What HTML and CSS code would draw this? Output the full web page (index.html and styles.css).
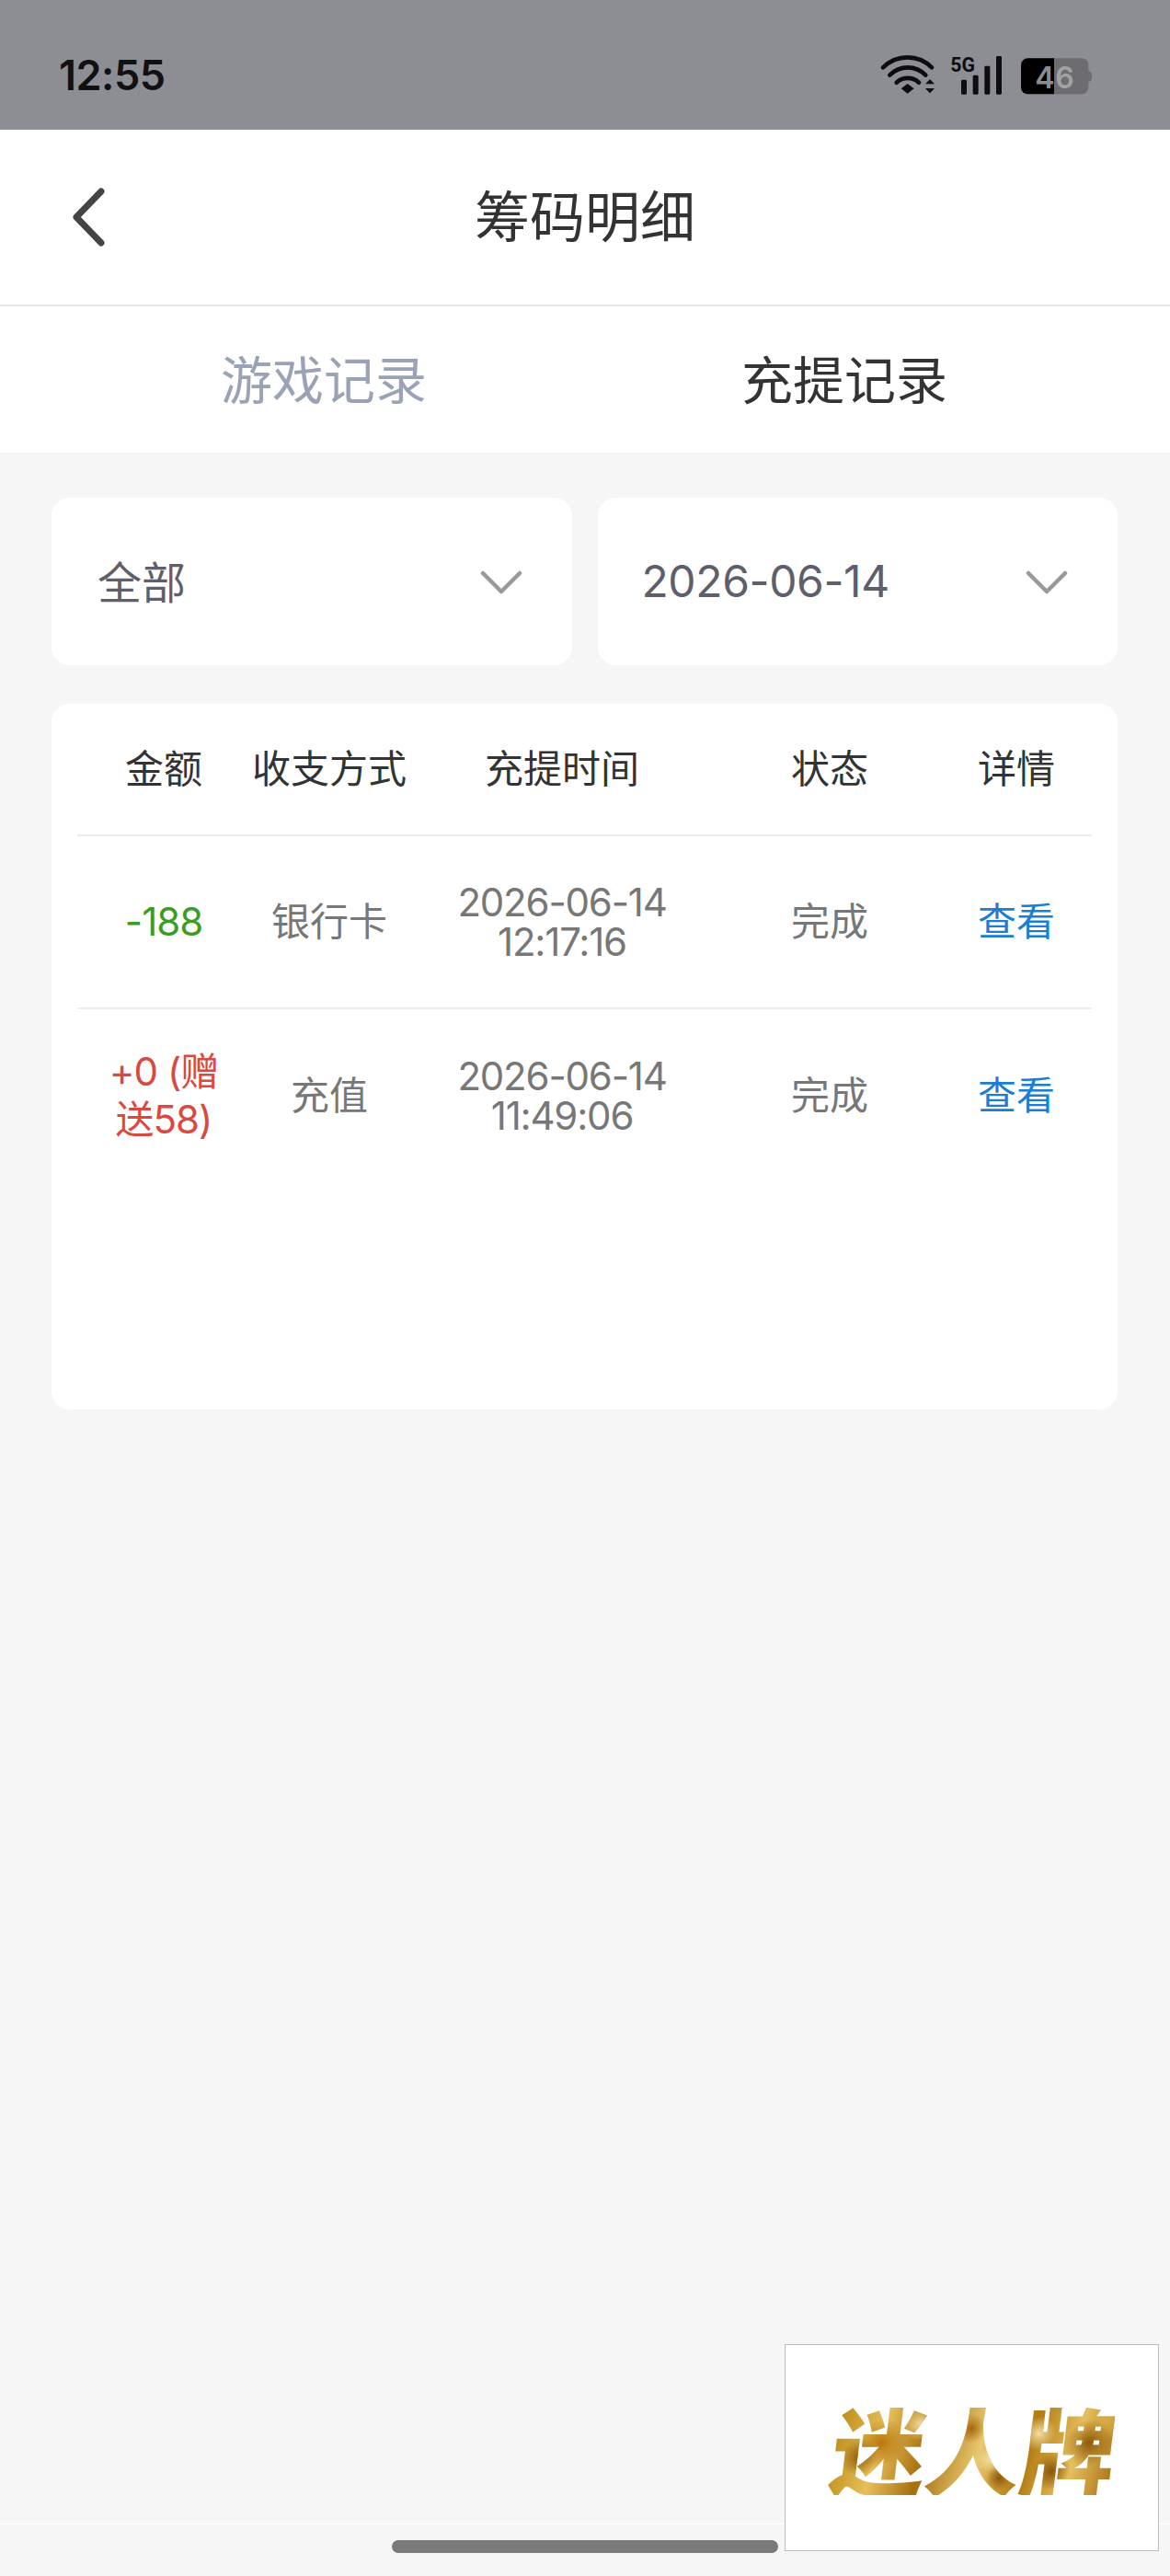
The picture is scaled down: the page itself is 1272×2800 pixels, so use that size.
FILE: index.html
```html
<!DOCTYPE html>
<html lang="zh-CN">
<head>
<meta charset="utf-8">
<title>筹码明细</title>
<link rel="stylesheet" href="styles.css">
</head>
<body>
<div class="page">
  <div class="status">
    <div class="time">12:55</div>
    <svg class="status-icons" viewBox="0 0 900 270" width="300" height="90">
      <g fill="none" stroke="#0d0d0f" stroke-width="14" stroke-linecap="round">
        <path d="M120 130C165 86 235 86 279 130"/>
        <path d="M142 155C175 122 226 122 259 155"/>
        <path d="M164 179C185 160 216 160 237 179"/>
      </g>
      <path d="M200 183L221 199L200 215L179 199Z" fill="#0d0d0f"/>
      <path d="M258 184H288L273 168ZM258 198H288L273 214Z" fill="#0d0d0f"/>
      <text class="s5g" x="340" y="143" textLength="80" lengthAdjust="spacingAndGlyphs">5G</text>
      <g fill="#0d0d0f">
        <rect x="375" y="170" width="18" height="48" rx="4"/>
        <rect x="413" y="155" width="18" height="63" rx="4"/>
        <rect x="451" y="125" width="18" height="93" rx="4"/>
        <rect x="489" y="93" width="18" height="125" rx="4"/>
      </g>
      <path d="M678 100H592A22 22 0 0 0 570 122V195A22 22 0 0 0 592 217H678Z" fill="#000"/>
      <path d="M678 100H768A22 22 0 0 1 790 122V140C797 142 802 148 802 159C802 170 797 176 790 178V195A22 22 0 0 1 768 217H678Z" fill="#6c6c71"/>
      <text class="bat bat4" x="616" y="197">4</text>
      <text class="bat bat6" x="682" y="197">6</text>
    </svg>
  </div>

  <header class="nav">
    <svg class="back" viewBox="0 0 40 68" width="40" height="68">
      <path d="M32 6L5 34L32 62" fill="none" stroke="#444" stroke-width="7" stroke-linecap="round" stroke-linejoin="round"/>
    </svg>
    <h1 class="title">筹码明细</h1>
  </header>

  <nav class="tabs">
    <div class="tab">游戏记录</div>
    <div class="tab tab-active">充提记录</div>
  </nav>

  <main class="content">
    <div class="filters">
      <div class="select">
        <span>全部</span>
        <svg class="chev" viewBox="0 0 46 26" width="46" height="26"><path d="M3 3L23 23L43 3" fill="none" stroke="#999" stroke-width="4.5" stroke-linecap="round" stroke-linejoin="round"/></svg>
      </div>
      <div class="select select-date">
        <span>2026-06-14</span>
        <svg class="chev" viewBox="0 0 46 26" width="46" height="26"><path d="M3 3L23 23L43 3" fill="none" stroke="#999" stroke-width="4.5" stroke-linecap="round" stroke-linejoin="round"/></svg>
      </div>
    </div>

    <section class="card">
      <div class="row row-head">
        <div class="cell">金额</div>
        <div class="cell">收支方式</div>
        <div class="cell">充提时间</div>
        <div class="cell">状态</div>
        <div class="cell">详情</div>
      </div>
      <div class="row">
        <div class="cell amount green">-188</div>
        <div class="cell">银行卡</div>
        <div class="cell date">2026-06-14<br>12:17:16</div>
        <div class="cell">完成</div>
        <div class="cell blue">查看</div>
      </div>
      <div class="row row-last">
        <div class="cell amount red">+0 (赠送58)</div>
        <div class="cell">充值</div>
        <div class="cell date">2026-06-14<br>11:49:06</div>
        <div class="cell">完成</div>
        <div class="cell blue">查看</div>
      </div>
    </section>
  </main>

  <footer class="bottom">
    <div class="home"></div>
  </footer>

  <aside class="logo"><span class="logo-text">迷人牌</span></aside>
</div>
</body>
</html>
```

FILE: styles.css
```css
* { box-sizing: border-box; }
html, body { margin: 0; padding: 0; }
body {
  background: #f6f6f6;
  font-family: Inter, "Noto Sans CJK SC", sans-serif;
  color: #333;
}
.page {
  position: relative;
  width: 1272px;
  height: 2800px;
  display: flex;
  flex-direction: column;
  overflow: hidden;
}

/* status bar */
.status {
  height: 141px;
  flex: none;
  background: #8d8e93;
  display: flex;
  justify-content: space-between;
  align-items: flex-start;
  padding: 30px 52px 0 64px;
}
.time {
  font-size: 45px;
  font-weight: 600;
  line-height: 104px;
  color: #111;
  letter-spacing: -0.5px;
}
.status-icons { display: block; }
.s5g { font: 700 68px "Roboto", sans-serif; fill: #0d0d0f; }
.bat { font: 600 96px Inter, sans-serif; }
.bat4 { fill: #8c8c91; }
.bat6 { fill: #a2a2a6; }

/* nav */
.nav {
  height: 192px;
  flex: none;
  background: #fff;
  border-bottom: 2px solid #e8e8e8;
  position: relative;
  display: flex;
  align-items: center;
  justify-content: center;
}
.back {
  position: absolute;
  left: 78px;
  top: 61px;
}
.title {
  margin: 0;
  font-size: 60px;
  font-weight: 400;
  color: #333;
  line-height: 1;
}

/* tabs */
.tabs {
  height: 159px;
  flex: none;
  background: #fff;
  display: grid;
  grid-template-columns: 1fr 1fr;
  align-items: center;
  padding: 3px 71px 0 69px;
}
.tab {
  text-align: center;
  font-size: 56px;
  color: #9aa3b5;
  line-height: 1;
}
.tab-active { color: #333; }

/* filters */
.content {
  flex: 1;
  padding: 49px 57px 0 56px;
}
.filters {
  display: grid;
  grid-template-columns: 1fr 1fr;
  gap: 28px;
}
.select {
  height: 182px;
  background: #fff;
  border-radius: 20px;
  display: flex;
  align-items: center;
  justify-content: space-between;
  padding: 0 54px 0 50px;
  font-size: 48px;
  color: #5f5f6b;
}
.select span { margin-bottom: 5px; }
.select-date { padding-left: 48px; }
.select-date span { letter-spacing: -0.4px; margin-bottom: 2px; }
.chev { display: block; margin-top: 1px; }

/* table */
.card {
  margin-top: 42px;
  height: 767px;
  background: #fff;
  border-radius: 20px;
  padding: 0 28px;
}
.row {
  display: grid;
  grid-template-columns: 188px 172px 334px 248px 161px;
  align-items: center;
  height: 188px;
  border-bottom: 2px solid #ebebeb;
  font-size: 42px;
  color: #777;
  text-align: center;
}
.row-head {
  height: 144px;
  color: #333;
}
.row-last { border-bottom: 0; }
.cell { line-height: 52px; white-space: normal; }
.cell:nth-child(5) { padding-right: 3px; }
.amount { padding: 0 22px; letter-spacing: -1px; }
.date { line-height: 43px; letter-spacing: -1.2px; }
.green { color: #3a9d23; }
.red { color: #d9493f; }
.blue { color: #1a7fd4; }

/* bottom */
.bottom {
  height: 57px;
  flex: none;
  border-top: 1px solid #fff;
  padding-top: 17px;
  display: flex;
  justify-content: center;
}
.home {
  width: 420px;
  height: 14px;
  border-radius: 7px;
  background: #7a7a7a;
}

/* floating logo */
.logo {
  position: absolute;
  left: 853px;
  top: 2548px;
  width: 407px;
  height: 225px;
  background: #fff;
  border: 1px solid #bdbdbd;
  display: flex;
  align-items: center;
  justify-content: center;
  padding-left: 6px;
}
.logo-text {
  font-family: "Noto Sans CJK SC", sans-serif;
  font-weight: 900;
  font-size: 103px;
  line-height: 1;
  white-space: nowrap;
  transform: skewX(-7deg);
  background:
    radial-gradient(circle at 10% 60%, #8f5a0a 0, rgba(143,90,10,0) 7%),
    radial-gradient(circle at 17% 45%, #b8760c 0, rgba(184,118,12,0) 10%),
    radial-gradient(circle at 30% 25%, #f2dc9c 0, rgba(242,220,156,0) 8%),
    radial-gradient(circle at 48% 30%, #a8690c 0, rgba(168,105,12,0) 9%),
    radial-gradient(circle at 56% 62%, #f3dfa2 0, rgba(243,223,162,0) 8%),
    radial-gradient(circle at 60% 82%, #8f5a0a 0, rgba(143,90,10,0) 7%),
    radial-gradient(circle at 72% 35%, #f3dfa2 0, rgba(243,223,162,0) 8%),
    radial-gradient(circle at 78% 75%, #8a5508 0, rgba(138,85,8,0) 8%),
    radial-gradient(circle at 90% 45%, #8f5a0a 0, rgba(143,90,10,0) 9%),
    radial-gradient(circle at 95% 20%, #d9ab45 0, rgba(217,171,69,0) 8%),
    linear-gradient(100deg, #b8860f 0%, #e5bf5a 18%, #a66f0e 34%, #e8c871 52%, #b27a10 68%, #e6c060 84%, #a66f10 100%);
  -webkit-background-clip: text;
  background-clip: text;
  color: transparent;
}
```
